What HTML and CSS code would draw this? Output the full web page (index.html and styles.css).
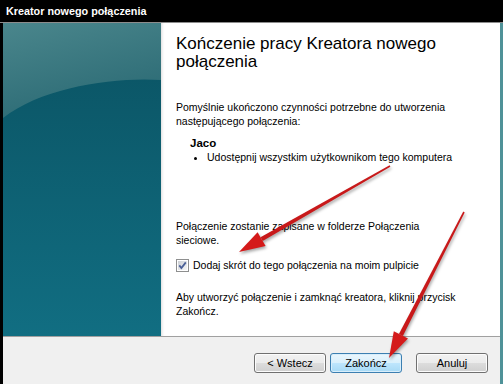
FILE: index.html
```html
<!DOCTYPE html>
<html lang="pl">
<head>
    <meta charset="UTF-8">
    <title>Kreator nowego połączenia</title>
    <link rel="stylesheet" href="styles.css">
</head>
<body>
    <div class="window">
        <div class="titlebar">Kreator nowego połączenia</div>
        <div class="frame">
            <div class="main">
                <div class="side">
                    <svg class="side-art" viewBox="0 0 158 313" preserveAspectRatio="none">
                        <defs>
                            <linearGradient id="deep" x1="0" y1="0" x2="0" y2="1">
                                <stop offset="0" stop-color="#0a5262"/>
                                <stop offset="1" stop-color="#116e82"/>
                            </linearGradient>
                            <linearGradient id="glow" x1="0" y1="0" x2="0.4" y2="1">
                                <stop offset="0" stop-color="#4a868c"/>
                                <stop offset="1" stop-color="#2c6b75"/>
                            </linearGradient>
                        </defs>
                        <rect width="158" height="313" fill="url(#deep)"/>
                        <path d="M0,0 H158 V57 C110,54 40,64 0,95 Z" fill="url(#glow)"/>
                    </svg>
                </div>
                <div class="content">
                    <h1>Kończenie pracy Kreatora nowego połączenia</h1>
                    <p class="intro">Pomyślnie ukończono czynności potrzebne do utworzenia następującego połączenia:</p>
                    <div class="summary">
                        <div class="conn-name">Jaco</div>
                        <ul>
                            <li>Udostępnij wszystkim użytkownikom tego komputera</li>
                        </ul>
                    </div>
                    <p class="saved">Połączenie zostanie zapisane w folderze Połączenia sieciowe.</p>
                    <label class="check">
                        <svg class="box" width="13" height="13" viewBox="0 0 13 13">
                            <defs>
                                <linearGradient id="boxfill" x1="0" y1="0" x2="1" y2="1">
                                    <stop offset="0" stop-color="#cbcfd5"/>
                                    <stop offset="1" stop-color="#f6f6f6"/>
                                </linearGradient>
                            </defs>
                            <rect x="0.5" y="0.5" width="12" height="12" fill="#fff" stroke="#8e8f8f"/>
                            <rect x="2" y="2" width="9" height="9" fill="url(#boxfill)"/>
                            <path d="M3.3,6.4 L5.4,9 L9.8,3.4" fill="none" stroke="#4a5f97" stroke-width="1.8"/>
                        </svg>
                        <span>Dodaj skrót do tego połączenia na moim pulpicie</span>
                    </label>
                    <p class="finish">Aby utworzyć połączenie i zamknąć kreatora, kliknij przycisk Zakończ.</p>
                </div>
            </div>
            <div class="footer">
                <div class="btn-pair">
                    <button class="btn">&lt; Wstecz</button>
                    <button class="btn btn-default">Zakończ</button>
                </div>
                <button class="btn">Anuluj</button>
            </div>
        </div>
        <svg class="arrows" width="503" height="384" viewBox="0 0 503 384">
            <!-- shafts taper from tail to head -->
            <polygon points="390.4,166.7 389.6,165.3 260.5,237.2 262.7,241" fill="#c8191a"/>
            <polygon points="239,252 265.6,246.1 257.6,232.2" fill="#d41a1a"/>
            <polygon points="464.7,212.4 463.3,211.6 398.9,333.9 402.9,335.9" fill="#c8191a"/>
            <polygon points="389,358 408,338.6 393.8,331.2" fill="#d41a1a"/>
        </svg>
    </div>
</body>
</html>
```

FILE: styles.css
```css
body {
    margin: 0;
    padding: 0;
    background: #000;
    font-family: "Liberation Sans", Arial, sans-serif;
}
.window {
    position: relative;
    width: 503px;
    height: 384px;
    display: flex;
    flex-direction: column;
    background: #000;
    overflow: hidden;
}
.titlebar {
    height: 22px;
    padding-left: 6px;
    color: #fff;
    font-weight: bold;
    font-size: 10.8px;
    line-height: 22px;
    border-bottom: 1px solid #8c8c8c;
}
.frame {
    flex: 1;
    display: flex;
    flex-direction: column;
    margin-left: 3px;
    border-right: 3px solid #4f9298;
}
.main {
    height: 313px;
    display: flex;
}
.side {
    width: 158px;
    flex: none;
}
.side-art {
    display: block;
    width: 100%;
    height: 100%;
}
.content {
    flex: 1;
    background: #fff;
    padding: 12px 0 0 15px;
    box-shadow: inset 3px 0 3px -2px rgba(0,0,0,0.15);
    font-size: 10.5px;
    line-height: 14px;
    color: #000;
}
.content h1 {
    margin: 0;
    font-weight: normal;
    font-size: 17px;
    line-height: 18px;
    width: 300px;
}
.content p {
    margin: 0;
    width: 285px;
}
.intro {
    margin-top: 29px !important;
}
.summary {
    margin-top: 8px;
    padding-left: 14px;
}
.conn-name {
    font-weight: bold;
    font-size: 11.5px;
}
.summary ul {
    margin: 0;
    padding: 0 0 0 17px;
}
.summary li {
    list-style: disc;
}
.saved {
    margin-top: 55px !important;
}
.check {
    display: flex;
    align-items: center;
    gap: 4px;
    margin-top: 11px;
    height: 14px;
}
.box {
    display: block;
    flex: none;
}
.finish {
    margin-top: 18px !important;
}
.footer {
    flex: 1;
    display: flex;
    justify-content: flex-end;
    align-items: flex-start;
    gap: 14px;
    padding: 16px 12px 0 0;
    background: #f0f0f0;
    border-top: 1px solid #a0a0a0;
}
.btn-pair {
    display: flex;
    gap: 4px;
}
.btn {
    width: 72px;
    height: 20px;
    padding: 0;
    font-family: "Liberation Sans", Arial, sans-serif;
    font-size: 11px;
    color: #000;
    border: 1px solid #707070;
    border-radius: 3px;
    background: linear-gradient(#f2f2f2 0%, #ebebeb 49%, #dddddd 50%, #cfcfcf 100%);
    box-shadow: inset 0 0 0 1px #fcfcfc;
}
.btn-default {
    border-color: #3c7fb1;
    background: linear-gradient(#eaf6fd 0%, #d9f0fc 49%, #bee6fd 50%, #a7d9f5 100%);
    box-shadow: inset 0 0 0 1px #d8eefb;
}
.arrows {
    position: absolute;
    left: 0;
    top: 0;
    pointer-events: none;
    filter: drop-shadow(1px 2px 1.5px rgba(0,0,0,0.35));
}
```
